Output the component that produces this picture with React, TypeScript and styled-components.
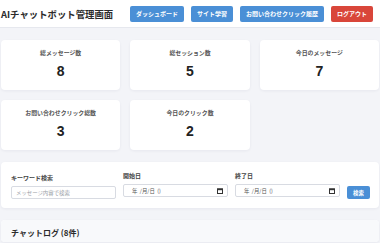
import React from "react";
import styled, { createGlobalStyle } from "styled-components";

const Global = createGlobalStyle`
  html, body { margin: 0; padding: 0; background: #f3f4f8; }
  body { font-family: "Noto Sans CJK JP", "Noto Sans", sans-serif; color: #222; }
  * { box-sizing: border-box; }
`;

const Page = styled.div`
  width: 380px;
  min-height: 243px;
  overflow: hidden;
`;

const Header = styled.header`
  height: 28px;
  background: #ffffff;
  border-bottom: 1px solid #e6e8ee;
  display: flex;
  align-items: center;
  justify-content: space-between;
  padding: 0 7px 0 1px;
`;

const Title = styled.h1`
  margin: 0;
  font-size: 9.4px;
  font-weight: 700;
  color: #2b2b2b;
`;

const Nav = styled.nav`
  display: flex;
  gap: 7px;
`;

const NavButton = styled.button<{ $danger?: boolean }>`
  height: 16px;
  padding: 0 6px;
  border: none;
  border-radius: 2px;
  background: ${(p) => (p.$danger ? "#d9463a" : "#4a8fd6")};
  color: #fff;
  font-family: inherit;
  font-size: 6px;
  font-weight: 700;
  line-height: 16px;
  white-space: nowrap;
  cursor: pointer;
`;

const Main = styled.main`
  padding: 12px 1px 0 1px;
  display: flex;
  flex-direction: column;
  gap: 12px;
`;

const StatGrid = styled.div`
  display: grid;
  grid-template-columns: repeat(3, 1fr);
  gap: 10px;
`;

const StatCard = styled.div`
  height: 50px;
  background: #fff;
  border-radius: 4px;
  box-shadow: 0 1px 3px rgba(30, 40, 80, 0.06);
  display: flex;
  flex-direction: column;
  align-items: center;
  padding-top: 9px;
`;

const StatLabel = styled.div`
  font-size: 5.9px;
  font-weight: 700;
  color: #555;
  line-height: 8px;
`;

const StatValue = styled.div`
  margin-top: 6px;
  font-family: "Liberation Sans", "Noto Sans", sans-serif;
  font-size: 14px;
  font-weight: 700;
  color: #222;
  line-height: 16px;
`;

const Card = styled.section`
  background: #fff;
  border-radius: 4px;
  box-shadow: 0 1px 3px rgba(30, 40, 80, 0.06);
`;

const SearchCard = styled(Card)`
  height: 46px;
  padding: 10px 9px 0 10px;
  display: flex;
  align-items: flex-start;
  gap: 7px;
`;

const Field = styled.div`
  flex: 1;
  display: flex;
  flex-direction: column;
  gap: 3px;
`;

const FieldLabel = styled.label<{ $offset?: number }>`
  font-size: 6px;
  font-weight: 700;
  color: #444;
  line-height: 10px;
  margin-top: ${(p) => p.$offset ?? 0}px;
`;

const TextInput = styled.input`
  height: 13px;
  width: 100%;
  border: 1px solid #d8dbe2;
  border-radius: 2px;
  padding: 0 4px;
  font-family: inherit;
  font-size: 5.4px;
  color: #333;
  background: #fff;
  outline: none;
  &::placeholder { color: #9a9ea6; }
`;

const DateBox = styled.div`
  height: 13px;
  border: 1px solid #d8dbe2;
  border-radius: 2px;
  padding: 0 4px 0 8px;
  display: flex;
  align-items: center;
  justify-content: space-between;
  font-size: 5.4px;
  color: #555;
  background: #fff;
  white-space: pre;
`;

const SearchButton = styled.button`
  align-self: flex-start;
  margin-top: 14px;
  width: 23px;
  height: 13px;
  border: none;
  border-radius: 2px;
  background: #4a8fd6;
  color: #fff;
  font-family: inherit;
  font-size: 5.4px;
  font-weight: 700;
  padding: 0;
  cursor: pointer;
`;

const LogCard = styled(Card)`
  overflow: hidden;
`;

const LogHeader = styled.div`
  background: #f8f9fb;
  height: 22px;
  padding: 8px 10px 0;
`;

const LogTitle = styled.h2`
  margin: 0;
  font-size: 8px;
  font-weight: 700;
  color: #2b2b2b;
  line-height: 10px;
`;

const Calendar = () => (
  <svg width="6" height="6" viewBox="0 0 6 6">
    <rect x="0.5" y="0.8" width="5" height="4.7" fill="none" stroke="#333" strokeWidth="1" />
    <rect x="0.5" y="0.8" width="5" height="1.4" fill="#333" />
  </svg>
);

const stats = [
  { label: "総メッセージ数", value: 8 },
  { label: "総セッション数", value: 5 },
  { label: "今日のメッセージ", value: 7 },
  { label: "お問い合わせクリック総数", value: 3 },
  { label: "今日のクリック数", value: 2 },
];

export default function App() {
  return (
    <Page>
      <Global />
      <Header>
        <Title>AIチャットボット管理画面</Title>
        <Nav>
          <NavButton>ダッシュボード</NavButton>
          <NavButton>サイト学習</NavButton>
          <NavButton>お問い合わせクリック履歴</NavButton>
          <NavButton $danger>ログアウト</NavButton>
        </Nav>
      </Header>
      <Main>
        <StatGrid>
          {stats.map((s) => (
            <StatCard key={s.label}>
              <StatLabel>{s.label}</StatLabel>
              <StatValue>{s.value}</StatValue>
            </StatCard>
          ))}
        </StatGrid>
        <SearchCard>
          <Field>
            <FieldLabel $offset={1}>キーワード検索</FieldLabel>
            <TextInput placeholder="メッセージ内容で検索" />
          </Field>
          <Field>
            <FieldLabel $offset={-1}>開始日</FieldLabel>
            <DateBox>
              <span>{"年  /月/日  ()"}</span>
              <Calendar />
            </DateBox>
          </Field>
          <Field>
            <FieldLabel $offset={-1}>終了日</FieldLabel>
            <DateBox>
              <span>{"年  /月/日  ()"}</span>
              <Calendar />
            </DateBox>
          </Field>
          <SearchButton>検索</SearchButton>
        </SearchCard>
        <LogCard>
          <LogHeader>
            <LogTitle>チャットログ (8件)</LogTitle>
          </LogHeader>
        </LogCard>
      </Main>
    </Page>
  );
}
